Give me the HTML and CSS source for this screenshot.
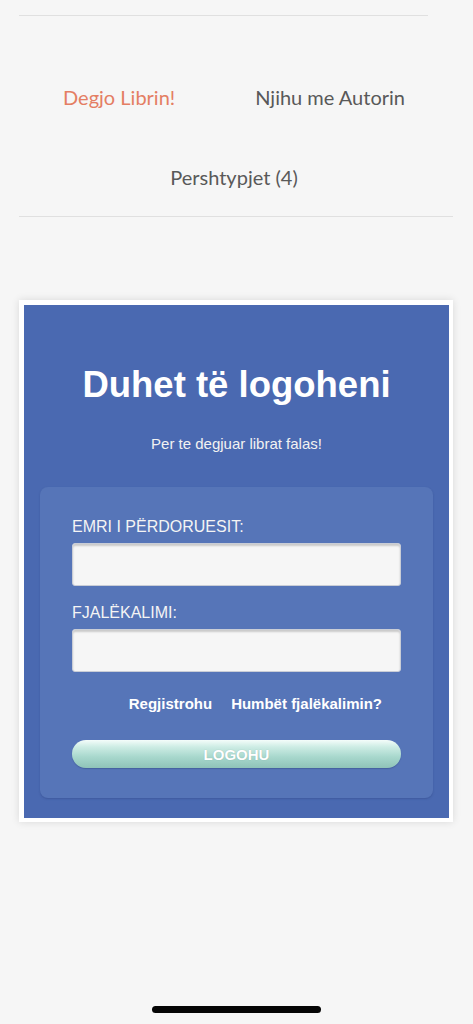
FILE: index.html
```html
<!DOCTYPE html>
<html lang="sq">
<head>
<meta charset="utf-8">
<title>Degjo Librin</title>
<link rel="stylesheet" href="styles.css">
</head>
<body>
<div class="page">
  <div class="rule rule-top"></div>
  <nav class="tabs">
    <a class="tab tab-active">Degjo Librin!</a>
    <a class="tab">Njihu me Autorin</a>
    <a class="tab">Pershtypjet (4)</a>
  </nav>
  <div class="rule rule-bottom"></div>

  <section class="card">
    <h1 class="card-title">Duhet të logoheni</h1>
    <p class="card-sub">Per te degjuar librat falas!</p>
    <form class="panel">
      <label class="field-label">EMRI I PËRDORUESIT:</label>
      <input class="field-input" type="text">
      <label class="field-label field-label-2">FJALËKALIMI:</label>
      <input class="field-input" type="password">
      <div class="links">
        <a class="link">Regjistrohu</a>
        <a class="link">Humbët fjalëkalimin?</a>
      </div>
      <button class="btn" type="button">LOGOHU</button>
    </form>
  </section>
</div>
<div class="home-indicator"></div>
</body>
</html>
```
FILE: styles.css
```css
html, body {
  margin: 0;
  padding: 0;
  background: #f6f6f6;
}
body {
  font-family: Lato, "Open Sans", sans-serif;
  min-height: 1024px;
}
.page {
  padding-top: 15px;
}
.rule {
  height: 1px;
  background: #e0e0e0;
  margin-left: 19px;
}
.rule-top {
  width: 409px;
}
.rule-bottom {
  width: 434px;
  margin-top: -1px;
}
.tabs {
  display: flex;
  flex-wrap: wrap;
  justify-content: center;
  padding: 41px 0 0 0;
  width: 468px;
  margin: 0;
  box-sizing: border-box;
}
.tab {
  display: block;
  padding: 28px 40px;
  font-size: 20px;
  line-height: 24px;
  color: #595959;
  text-decoration: none;
}
.tab-active {
  color: #e47e63;
}
.card {
  margin: 83px 20px 0 19px;
  border: 5px solid #ffffff;
  border-right-width: 4px;
  border-bottom-width: 4px;
  background: #4a69b1;
  box-shadow: 0 0 8px rgba(0, 0, 0, 0.12);
  padding: 59px 16px 20px 16px;
  font-family: "Liberation Sans", Arial, sans-serif;
}
.card-title {
  margin: 0;
  text-align: center;
  color: #ffffff;
  font-size: 36.5px;
  line-height: 42px;
  font-weight: bold;
}
.card-sub {
  margin: 28px 0 0 0;
  text-align: center;
  color: #f2f2f2;
  font-size: 15px;
  line-height: 20px;
}
.panel {
  margin-top: 33px;
  background: #5675b8;
  border-radius: 8px;
  box-shadow: 0 1px 2px rgba(40, 60, 120, 0.35);
  padding: 30px 32px 30px 32px;
  display: flex;
  flex-direction: column;
}
.field-label {
  display: block;
  color: #f4f4f4;
  font-size: 16px;
  line-height: 20px;
}
.field-label-2 {
  margin-top: 17px;
}
.field-input {
  display: block;
  margin: 6px 0 0 0;
  height: 43px;
  box-sizing: border-box;
  border: 1px solid #c9cdd6;
  border-radius: 3px;
  background: #f6f6f6;
  box-shadow: inset 0 2px 2px rgba(0, 0, 0, 0.18);
  width: 100%;
}
.links {
  display: flex;
  justify-content: flex-end;
  gap: 19px;
  margin-top: 23px;
  padding-right: 19px;
}
.link {
  color: #ffffff;
  font-weight: bold;
  font-size: 15px;
  line-height: 18px;
  text-decoration: none;
}
.btn {
  margin-top: 27px;
  height: 28px;
  border: none;
  border-radius: 14px;
  background: linear-gradient(to bottom, #f4fdfa 0%, #cdece4 25%, #a8d8cd 60%, #8fc3b8 100%);
  box-shadow: 0 1px 1px rgba(30, 50, 100, 0.3);
  color: #ffffff;
  font-family: "Liberation Sans", Arial, sans-serif;
  font-weight: bold;
  font-size: 15px;
  text-shadow: 0 0 1px rgba(0, 0, 0, 0.2);
  padding: 0;
}
.home-indicator {
  position: absolute;
  left: 152px;
  top: 1006px;
  width: 169px;
  height: 7px;
  border-radius: 4px;
  background: #050505;
}
```
